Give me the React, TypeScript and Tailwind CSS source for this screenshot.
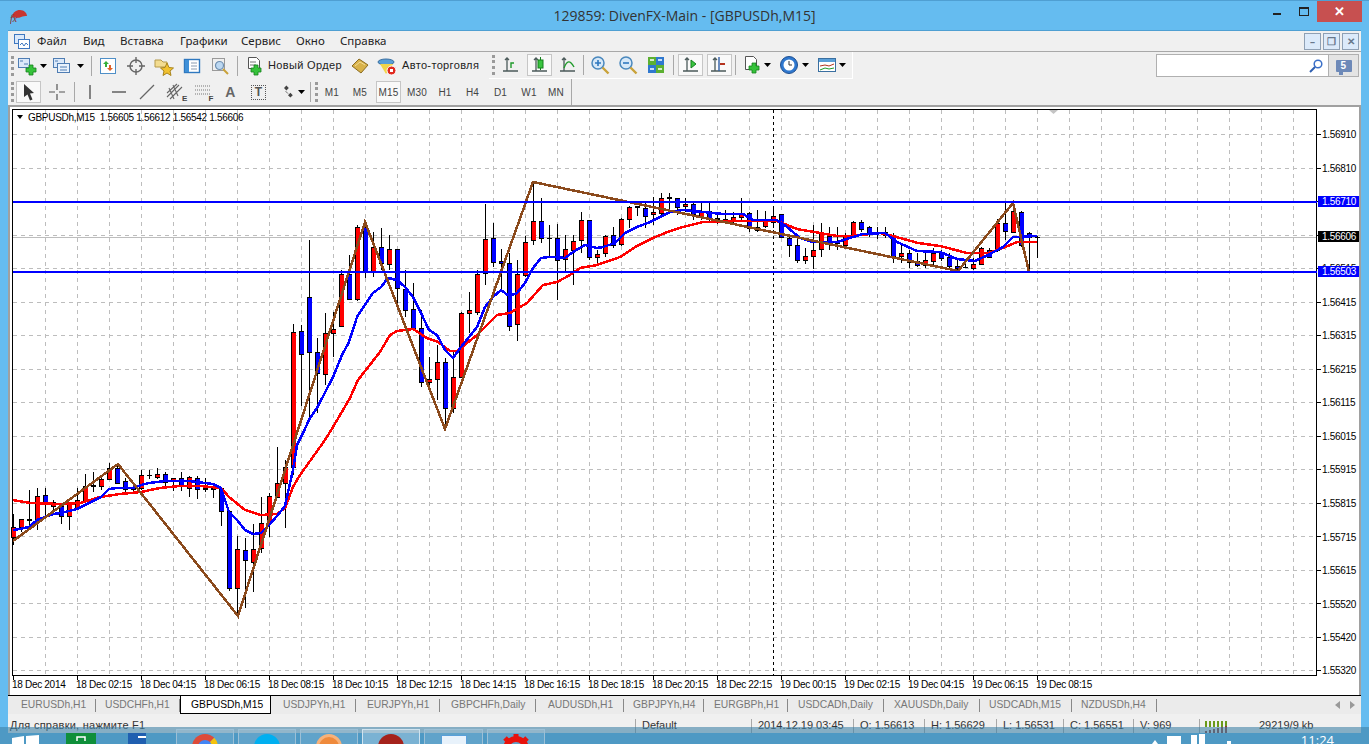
import type { ReactNode } from 'react';

type Candle = [number, number, number, number, 'r' | 'b' | 'd'];

// body top, body bottom, wick top, wick bottom, colour; one candle every 8px from x=13
const candles: Candle[] = [
    [527, 537, 514, 545, 'r'], [519, 527, 519, 532, 'r'], [519, 521, 490, 530, 'd'], [496, 520, 488, 530, 'r'],
    [495, 503, 488, 517, 'b'], [502, 506, 500, 510, 'r'], [506, 516, 503, 524, 'b'], [504, 516, 503, 530, 'r'],
    [500, 508, 488, 508, 'r'], [486, 500, 474, 502, 'r'], [485, 487, 472, 492, 'd'], [479, 486, 478, 490, 'r'],
    [468, 479, 463, 480, 'r'], [468, 483, 463, 484, 'b'], [481, 489, 478, 493, 'b'], [488, 490, 485, 492, 'd'],
    [475, 488, 470, 490, 'r'], [475, 476, 470, 479, 'd'], [474, 477, 468, 479, 'r'], [474, 482, 472, 487, 'b'],
    [478, 481, 478, 491, 'r'], [478, 485, 472, 491, 'b'], [477, 488, 476, 497, 'r'], [478, 489, 476, 499, 'b'],
    [488, 490, 478, 492, 'd'], [488, 490, 483, 498, 'd'], [488, 511, 487, 526, 'b'], [511, 588, 511, 591, 'b'],
    [549, 588, 536, 616, 'r'], [550, 560, 538, 608, 'b'], [549, 562, 524, 592, 'r'], [523, 548, 497, 553, 'r'],
    [496, 523, 493, 537, 'r'], [483, 497, 447, 498, 'r'], [467, 483, 460, 528, 'r'], [332, 467, 324, 475, 'r'],
    [331, 354, 325, 406, 'b'], [297, 352, 240, 420, 'b'], [352, 373, 338, 413, 'b'], [333, 374, 313, 385, 'r'],
    [329, 333, 312, 357, 'r'], [274, 326, 270, 327, 'r'], [274, 299, 255, 300, 'b'], [227, 299, 225, 301, 'r'],
    [227, 272, 222, 278, 'b'], [247, 272, 232, 277, 'r'], [247, 263, 228, 270, 'b'], [249, 264, 235, 270, 'r'],
    [249, 288, 249, 303, 'b'], [289, 310, 270, 317, 'b'], [309, 328, 283, 330, 'b'], [328, 382, 310, 387, 'b'],
    [379, 382, 357, 387, 'r'], [362, 379, 345, 400, 'r'], [362, 408, 358, 430, 'b'], [377, 408, 352, 413, 'r'],
    [313, 377, 312, 378, 'r'], [310, 313, 292, 333, 'r'], [274, 312, 270, 315, 'r'], [239, 273, 204, 285, 'r'],
    [238, 262, 223, 267, 'b'], [261, 263, 249, 290, 'b'], [263, 326, 253, 331, 'b'], [274, 324, 260, 341, 'r'],
    [242, 275, 236, 277, 'r'], [221, 240, 182, 245, 'r'], [221, 238, 198, 243, 'b'], [238, 239, 225, 257, 'd'],
    [238, 260, 224, 300, 'b'], [249, 259, 235, 272, 'r'], [241, 250, 235, 285, 'r'], [220, 240, 212, 253, 'r'],
    [220, 257, 220, 260, 'b'], [254, 257, 250, 265, 'r'], [236, 253, 235, 257, 'r'], [235, 245, 227, 248, 'b'],
    [219, 244, 218, 246, 'r'], [207, 219, 206, 228, 'r'], [206, 208, 206, 216, 'd'], [208, 216, 203, 228, 'b'],
    [212, 214, 197, 225, 'r'], [198, 213, 193, 215, 'r'], [197, 199, 193, 213, 'd'], [198, 207, 198, 215, 'b'],
    [204, 206, 198, 212, 'r'], [204, 214, 202, 220, 'b'], [212, 216, 203, 220, 'r'], [211, 218, 203, 222, 'b'],
    [218, 220, 212, 224, 'd'], [219, 220, 210, 222, 'd'], [217, 220, 212, 223, 'r'], [213, 217, 198, 222, 'r'],
    [213, 228, 212, 232, 'b'], [227, 230, 210, 232, 'r'], [219, 226, 211, 228, 'r'], [216, 222, 208, 228, 'r'],
    [214, 237, 214, 238, 'b'], [238, 245, 235, 257, 'b'], [245, 260, 237, 263, 'b'], [256, 260, 248, 264, 'r'],
    [250, 256, 225, 269, 'r'], [233, 249, 223, 257, 'r'], [236, 244, 227, 250, 'b'], [243, 244, 227, 250, 'd'],
    [236, 245, 233, 247, 'r'], [222, 235, 221, 236, 'r'], [222, 229, 220, 232, 'b'], [227, 233, 226, 237, 'b'],
    [232, 233, 227, 239, 'd'], [232, 235, 227, 238, 'b'], [235, 256, 233, 263, 'b'], [253, 256, 243, 263, 'r'],
    [253, 262, 250, 268, 'b'], [261, 265, 253, 267, 'b'], [260, 265, 252, 268, 'r'], [253, 261, 248, 265, 'r'],
    [252, 258, 250, 261, 'b'], [257, 266, 253, 268, 'b'], [266, 268, 260, 270, 'b'], [267, 268, 260, 268, 'd'],
    [264, 268, 258, 270, 'r'], [248, 264, 247, 264, 'r'], [250, 257, 248, 257, 'b'], [223, 250, 219, 252, 'r'],
    [223, 231, 202, 240, 'b'], [211, 232, 203, 233, 'r'], [212, 245, 211, 247, 'b'], [233, 237, 232, 272, 'b'],
    [237, 238, 236, 258, 'd'],
];

const blueMa = '13,530 20,529 29,527 37,520 45,517 53,514 61,513 69,511 77,509 85,505 93,501 101,497 109,489 117,488 133,488 141,485 149,483 157,482 165,481 189,481 197,482 205,483 213,484 221,488 229,512 237,520 245,530 253,534 261,533 269,525 277,516 285,506 293,470 297,445 303,433 310,418 317,408 333,377 342,355 349,342 357,317 365,305 373,293 381,287 388,278 397,280 405,287 413,297 421,313 429,330 437,335 445,350 453,358 461,347 469,337 477,327 485,307 493,297 501,290 509,296 517,293 525,283 533,268 541,258 549,257 557,257 565,258 573,252 585,245 597,248 603,247 615,243 625,233 637,227 650,222 670,212 683,210 703,212 723,214 743,214 753,220 777,220 787,227 800,238 813,242 837,242 853,237 863,234 885,233 897,242 917,251 940,252 957,259 975,261 988,255 1003,247 1013,237 1037,236';
const redMa = '13,500 30,503 60,504 80,503 100,497 120,494 141,492 160,488 180,486 200,486 221,488 229,497 245,510 261,515 277,514 285,508 293,487 300,475 325,440 333,427 350,398 358,380 380,352 390,335 397,331 413,329 427,338 438,342 450,351 457,351 477,335 497,315 510,313 527,303 543,285 557,282 570,275 580,268 597,265 620,257 637,246 653,238 670,231 683,227 703,222 717,222 737,221 777,221 797,229 820,233 837,236 853,236 870,234 880,233 893,236 918,243 940,246 967,253 988,253 1003,248 1017,242 1037,242';
const zigzag = '13,541 118,464 238,616 365,222 445,429 533,182 958,271 1013,203 1029,272';

const priceLabels: [string, number][] = [
    ['1.56910', 134], ['1.56810', 168], ['1.56415', 302], ['1.56315', 335], ['1.56215', 369], ['1.56115', 402],
    ['1.56015', 436], ['1.55915', 469], ['1.55815', 503], ['1.55715', 537], ['1.55615', 570], ['1.55520', 604],
    ['1.55420', 637], ['1.55320', 670], ['1.56515', 268],
];

const timeLabels = [
    '18 Dec 2014', '18 Dec 02:15', '18 Dec 04:15', '18 Dec 06:15', '18 Dec 08:15', '18 Dec 10:15', '18 Dec 12:15', '18 Dec 14:15',
    '18 Dec 16:15', '18 Dec 18:15', '18 Dec 20:15', '18 Dec 22:15', '19 Dec 00:15', '19 Dec 02:15', '19 Dec 04:15', '19 Dec 06:15', '19 Dec 08:15',
];

const gridX = Array.from({ length: 40 }, (_, i) => 45 + i * 32).filter(x => x < 1316);
const gridY = Array.from({ length: 17 }, (_, i) => 134 + i * 33.5);

function Chart() {
    return (
        <svg width="1349" height="588" viewBox="10 107 1349 588" className="block bg-white text-[10px] tracking-[-0.3px] [font-family:'Liberation_Sans',sans-serif]">
            <g shapeRendering="crispEdges">
                {gridX.map(x => <line key={x} x1={x + 0.5} y1="110" x2={x + 0.5} y2="675" stroke="#bdbdbd" strokeDasharray="4 4" />)}
                {gridY.map(y => <line key={y} x1="13" y1={Math.round(y) + 0.5} x2="1316" y2={Math.round(y) + 0.5} stroke="#bdbdbd" strokeDasharray="4 4" />)}
                <line x1="13" y1="237.5" x2="1316" y2="237.5" stroke="#bdbdbd" />
                <line x1="773.5" y1="110" x2="773.5" y2="675" stroke="#000" strokeDasharray="3 3" />
                <rect x="12.5" y="109.5" width="1304" height="566" fill="none" stroke="#000" />
                {timeLabels.map((_, i) => <line key={i} x1={13.5 + i * 64} y1="675" x2={13.5 + i * 64} y2="680" stroke="#000" />)}
                {gridY.map(y => <line key={y} x1="1317" y1={Math.round(y) + 0.5} x2="1321" y2={Math.round(y) + 0.5} stroke="#000" />)}
                {candles.map(([top, bottom, high, low, kind], i) => {
                    const x = 13 + i * 8;
                    return (
                        <g key={i}>
                            <rect x={x} y={high} width="1" height={low - high} fill="#000" />
                            {kind === 'd' ? (
                                <rect x={x - 2} y={top} width="5" height={Math.max(bottom - top, 1)} fill="#000" />
                            ) : (
                                <>
                                    <rect x={x - 2} y={top} width="5" height={bottom - top + 1} fill="#000" />
                                    <rect x={x - 1} y={top + 1} width="4" height={Math.max(bottom - top - 1, 1)} fill={kind === 'r' ? '#ff0000' : '#0000ff'} />
                                </>
                            )}
                        </g>
                    );
                })}
                <polyline points={redMa} fill="none" stroke="#ff0000" strokeWidth="2.5" />
                <polyline points={blueMa} fill="none" stroke="#0000ff" strokeWidth="2.5" />
                <polyline points={zigzag} fill="none" stroke="#8b4a1c" strokeWidth="2.5" />
                <rect x="13" y="201" width="1304" height="2" fill="#0000ff" />
                <rect x="13" y="271" width="1304" height="2" fill="#0000ff" />
            </g>
            <polygon points="1049,110 1058,110 1053.5,114" fill="#c4c4c4" />
            <polygon points="17,115 23,115 20,119" fill="#000" />
            <text x="28" y="121" fill="#000">GBPUSDh,M15 &nbsp;1.56605 1.56612 1.56542 1.56606</text>
            {timeLabels.map((t, i) => <text key={t} x={12 + i * 64} y="688" fill="#000">{t}</text>)}
            {priceLabels.map(([t, y]) => <text key={t} x="1322" y={y + 3.5} fill="#000">{t}</text>)}
            <rect x="1318" y="196" width="41" height="11" fill="#0000ff" />
            <text x="1322" y="205" fill="#fff">1.56710</text>
            <rect x="1318" y="231" width="41" height="11" fill="#000" />
            <text x="1322" y="240" fill="#fff">1.56606</text>
            <rect x="1318" y="266" width="41" height="11" fill="#0000ff" />
            <text x="1322" y="275" fill="#fff">1.56503</text>
        </svg>
    );
}

const Ic = ({ children, size = 20 }: { children: ReactNode; size?: number }) => (
    <svg width={size} height={size} viewBox="0 0 20 20" className="block">{children}</svg>
);

const Plus = ({ x = 9, y = 9 }: { x?: number; y?: number }) => (
    <path d={`M${x + 3} ${y}h4v3h3v4h-3v3h-4v-3h-3v-4h3z`} fill="#35c23a" stroke="#14801d" strokeWidth="0.8" />
);

const Axes = () => <path d="M6 3v13M2 16h15M4 5l2-2 2 2" fill="none" stroke="#4b5a5a" strokeWidth="1.3" />;

const Caret = () => (
    <svg width="7" height="4" viewBox="0 0 7 4" className="block"><polygon points="0,0 7,0 3.5,4" fill="#000" /></svg>
);

const Handle = () => <div className="h-[20px] w-0 border-l-[3px] border-dotted border-[#9a9a9a]" />;

const Sep = () => <div className="h-[20px] w-px bg-[#a8a8a8]" />;

const Slot = ({ w, pressed, children }: { w: string; pressed?: boolean; children?: ReactNode }) => (
    <div className={`flex shrink-0 items-center justify-center ${w}`}>
        {pressed ? (
            <div className="flex h-[22px] w-[25px] items-center justify-center border border-[#c6c6c6] bg-[#f9f9f9]">{children}</div>
        ) : children}
    </div>
);

const WinPair = () => (
    <>
        <rect x="1.5" y="2.5" width="11" height="9" fill="#dbe9fa" stroke="#4f7db3" />
        <path d="M3 5h3M7 8h4" stroke="#4f7db3" />
    </>
);

const menuItems: [string, string][] = [
    ['Файл', 'w-[46px]'], ['Вид', 'w-[37px]'], ['Вставка', 'w-[60px]'], ['Графики', 'w-[61px]'],
    ['Сервис', 'w-[55px]'], ['Окно', 'w-[44px]'], ['Справка', 'w-[60px]'],
];

const tabs: [string, string, string][] = [
    ['EURUSDh,H1', 'w-[84px]', 'pl-[9px]'], ['USDCHFh,H1', 'w-[84px]', 'pl-[9px]'], ['GBPUSDh,M15', 'w-[91px]', 'pl-[10px]'],
    ['USDJPYh,H1', 'w-[85px]', 'pl-[12px]'], ['EURJPYh,H1', 'w-[84px]', 'pl-[11px]'], ['GBPCHFh,Daily', 'w-[96px]', 'pl-[11px]'],
    ['AUDUSDh,H1', 'w-[88px]', 'pl-[12px]'], ['GBPJPYh,H4', 'w-[80px]', 'pl-[9px]'], ['EURGBPh,H1', 'w-[84px]', 'pl-[10px]'],
    ['USDCADh,Daily', 'w-[96px]', 'pl-[10px]'], ['XAUUSDh,Daily', 'w-[96px]', 'pl-[10px]'], ['USDCADh,M15', 'w-[92px]', 'pl-[9px]'],
    ['NZDUSDh,H4', 'w-[85px]', 'pl-[9px]'],
];

const statusCells: [string, string][] = [
    ['Default', 'w-[116px]'], ['2014.12.19 03:45', 'w-[102px]'], ['O: 1.56613', 'w-[71px]'],
    ['H: 1.56629', 'w-[72px]'], ['L: 1.56531', 'w-[67px]'], ['C: 1.56551', 'w-[70px]'], ['V: 969', 'w-[66px]'],
];

const timeframes: [string, string, boolean][] = [
    ['M1', 'w-[28px]', false], ['M5', 'w-[28px]', false], ['M15', 'w-[29px]', true], ['M30', 'w-[28px]', false], ['H1', 'w-[28px]', false],
    ['H4', 'w-[27px]', false], ['D1', 'w-[29px]', false], ['W1', 'w-[28px]', false], ['MN', 'w-[26px]', false],
];

const TaskBtn = ({ w, active, children }: { w: string; active?: boolean; children?: ReactNode }) => (
    <div className={`flex h-[20px] shrink-0 justify-center overflow-hidden border border-b-0 pt-[4px] ${w} ${active ? 'border-[#cfe3ef] bg-white/25' : 'border-[#9cc0d6] bg-white/10'}`}>
        {children}
    </div>
);

export default function App() {
    return (
        <div className="relative h-[744px] w-[1369px] overflow-hidden bg-[#65bcf0] [font-family:'Liberation_Sans',sans-serif]">
            {/* title bar */}
            <div className="relative flex h-[30px] items-center justify-center border-t border-[#4f9fd2]">
                <div className="absolute left-[10px] top-[9px] h-[14px] w-[17px]">
                    <svg width="17" height="14" viewBox="0 0 17 14" className="block">
                        <path d="M2 7C3 2 6 0 10 0s7 3 7 6c-2 0-4 0-6 1-1 1-4 1-9 0z" fill="#c8352f" />
                        <text x="0" y="12" fontSize="10" fontStyle="italic" fill="#8c2a25" className="[font-family:'Liberation_Serif',serif]">fx</text>
                    </svg>
                </div>
                <span className="pb-[1px] text-[14px] text-[#333] [font-family:'Open_Sans',sans-serif]">129859: DivenFX-Main - [GBPUSDh,M15]</span>
                <div className="absolute left-[1273px] top-[12px] h-[2px] w-[8px] bg-[#222]" />
                <div className="absolute left-[1299px] top-[6px] h-[9px] w-[10px] border border-t-2 border-[#222]" />
                <div className="absolute left-[1317px] top-0 flex h-[21px] w-[45px] items-center justify-center bg-[#c75050] text-[13px] font-bold leading-none text-white">✕</div>
            </div>

            {/* terminal window */}
            <div className="ml-[8px] flex h-[703px] w-[1353px] flex-col bg-[#f0f0f0]">
                <div className="h-px bg-[#4f9fd2]" />
                {/* menu */}
                <div className="flex h-[20px] items-center text-[11.5px] text-[#222] [font-family:'Noto_Sans',sans-serif]">
                    <div className="flex w-[29px] shrink-0 justify-center pr-[2px]">
                        <svg width="16" height="15" viewBox="0 0 16 15" className="block">
                            <rect x="0.5" y="0.5" width="10" height="9" fill="#dbe9fa" stroke="#3f78c0" />
                            <rect x="4.5" y="5.5" width="11" height="9" fill="#fff" stroke="#3f78c0" />
                            <path d="M6 11l2-2 2 3 2-3 2 2" fill="none" stroke="#3f78c0" />
                        </svg>
                    </div>
                    {menuItems.map(([label, w]) => <div key={label} className={`shrink-0 ${w}`}>{label}</div>)}
                    <div className="ml-auto flex gap-[2px] pr-[2px]">
                        {['–', '❐', '✕'].map(g => (
                            <div key={g} className="flex h-[17px] w-[17px] items-center justify-center border border-[#8fa0b4] bg-[#dceafa] text-[10px] font-bold leading-none text-[#68788c]">{g}</div>
                        ))}
                    </div>
                </div>

                {/* first toolbar row */}
                <div className="flex h-[28px] items-center border-t border-[#a8a8a8] text-[11px] tracking-[0.35px] text-[#222]">
                    <Slot w="w-[8px]"><Handle /></Slot>
                    <Slot w="w-[22px]"><Ic><WinPair /><Plus /></Ic></Slot>
                    <Slot w="w-[10px]"><Caret /></Slot>
                    <Slot w="w-[4px]" />
                    <Slot w="w-[20px]"><Ic><WinPair /><rect x="5.5" y="7.5" width="12" height="9" fill="#e9f2fc" stroke="#4f7db3" /><path d="M8 11h7M8 14h7" stroke="#4f7db3" /></Ic></Slot>
                    <Slot w="w-[16px]"><Caret /></Slot>
                    <Slot w="w-[6px]"><Sep /></Slot>
                    <Slot w="w-[28px]"><Ic><rect x="2.5" y="2.5" width="15" height="15" fill="#fff" stroke="#4f8fc7" /><path d="M8 5l3 3H9v3H7V8H5z" fill="#35b03a" /><path d="M12 15l-3-3h2V9h2v3h2z" fill="#e0622a" /></Ic></Slot>
                    <Slot w="w-[28px]"><Ic><circle cx="10" cy="10" r="6" fill="none" stroke="#666" strokeWidth="1.4" /><path d="M10 1v6M10 13v6M1 10h6M13 10h6" stroke="#666" strokeWidth="1.4" /></Ic></Slot>
                    <Slot w="w-[28px]"><Ic><path d="M1 4h6l2 2h4v5H1z" fill="#f3dc90" stroke="#b59a4a" /><polygon points="13,7 15,11.5 19.5,12 16,15 17,19.5 13,17 9,19.5 10,15 6.5,12 11,11.5" fill="#f2c230" stroke="#a8841c" /></Ic></Slot>
                    <Slot w="w-[28px]"><Ic><rect x="2.5" y="3.5" width="15" height="13" fill="#fff" stroke="#2f78bf" strokeWidth="1.4" /><rect x="3" y="4" width="4" height="12" fill="#3f90d8" /><path d="M9 7h6M9 10h6M9 13h6" stroke="#8a9bb0" /></Ic></Slot>
                    <Slot w="w-[28px]"><Ic><rect x="2.5" y="2.5" width="12" height="12" fill="#efefef" stroke="#9a9a9a" /><circle cx="9.5" cy="9.5" r="4" fill="#bcd8f2" stroke="#6f8fb0" strokeWidth="1.2" /><path d="M13 13l5 5" stroke="#c9a23a" strokeWidth="2" /></Ic></Slot>
                    <Slot w="w-[6px]"><Sep /></Slot>
                    <Slot w="w-[28px]"><Ic><path d="M4.5 1.5h8l3 3v8h-11z" fill="#fff" stroke="#555" /><path d="M6 6h6M6 9h6" stroke="#777" /><Plus x={7} y={9} /></Ic></Slot>
                    <div className="w-[77px] shrink-0 whitespace-nowrap">Новый Ордер</div>
                    <Slot w="w-[29px]"><Ic><path d="M2 10l7-7 9 6-7 8z" fill="#d8b24a" stroke="#8a6b20" /><path d="M5 10l5-4 5 3" fill="none" stroke="#f2dc96" /></Ic></Slot>
                    <Slot w="w-[26px]"><Ic><ellipse cx="9" cy="6" rx="8" ry="3" fill="#5a9fd8" stroke="#3a6fa0" /><path d="M3 8l6 10 5-6 2-4z" fill="#f2d54a" /><circle cx="14.5" cy="14.5" r="4.5" fill="#e02a20" stroke="#fff" /><rect x="13" y="13" width="3" height="3" fill="#fff" /></Ic></Slot>
                    <div className="w-[89px] shrink-0 whitespace-nowrap pl-[2px]">Авто-торговля</div>
                    {/* second toolbar */}
                    <div className="flex h-full shrink-0 items-center border-b border-r border-b-white border-r-white">
                        <Slot w="w-[8px]"><Handle /></Slot>
                        <Slot w="w-[28px]"><Ic><Axes /><path d="M10 13v-5h3" fill="none" stroke="#1f9a2a" strokeWidth="1.4" /></Ic></Slot>
                        <Slot w="w-[29px]" pressed><Ic><Axes /><rect x="8" y="5" width="5" height="8" fill="#39c43f" stroke="#14801d" /><path d="M10.5 2v3M10.5 13v2" stroke="#14801d" /></Ic></Slot>
                        <Slot w="w-[27px]"><Ic><Axes /><path d="M6 13c3-8 6-8 10-1" fill="none" stroke="#1f9a2a" strokeWidth="1.4" /></Ic></Slot>
                        <Slot w="w-[4px]"><Sep /></Slot>
                        <Slot w="w-[29px]"><Ic><circle cx="8" cy="8" r="6" fill="#d6e8f8" stroke="#4a88bd" strokeWidth="1.5" /><path d="M5 8h6M8 5v6" stroke="#2f78bf" strokeWidth="1.6" /><path d="M12.5 12.5l6 6" stroke="#c9a23a" strokeWidth="2.4" /></Ic></Slot>
                        <Slot w="w-[28px]"><Ic><circle cx="8" cy="8" r="6" fill="#d6e8f8" stroke="#4a88bd" strokeWidth="1.5" /><path d="M5 8h6" stroke="#2f78bf" strokeWidth="1.6" /><path d="M12.5 12.5l6 6" stroke="#c9a23a" strokeWidth="2.4" /></Ic></Slot>
                        <Slot w="w-[28px]"><Ic><rect x="2" y="2" width="8" height="8" fill="#5cb031" /><rect x="10" y="2" width="8" height="8" fill="#2f78cf" /><rect x="2" y="10" width="8" height="8" fill="#2f78cf" /><rect x="10" y="10" width="8" height="8" fill="#5cb031" /><path d="M4 5h4M12 5h4M4 14h4M12 14h4" stroke="#fff" strokeWidth="1.4" /></Ic></Slot>
                        <Slot w="w-[6px]"><Sep /></Slot>
                        <Slot w="w-[29px]" pressed><Ic><Axes /><polygon points="10,5 15,9 10,13" fill="#39c43f" stroke="#14801d" /></Ic></Slot>
                        <Slot w="w-[28px]" pressed><Ic><Axes /><path d="M10 2v14" stroke="#2f5fa8" strokeWidth="1.4" /><path d="M11 9h5" stroke="#b5341f" strokeWidth="2" /></Ic></Slot>
                        <Slot w="w-[4px]"><Sep /></Slot>
                        <Slot w="w-[26px] pl-[6px]"><Ic><path d="M2.5 1.5h8l3 3v10h-11z" fill="#fff" stroke="#555" /><Plus x={6} y={8} /></Ic></Slot>
                        <Slot w="w-[8px]"><Caret /></Slot>
                        <Slot w="w-[29px] pl-[7px]"><Ic><circle cx="10" cy="10" r="8.5" fill="#2f78cf" stroke="#1f4f90" /><circle cx="10" cy="10" r="5.5" fill="#fff" /><path d="M10 6v4h3" fill="none" stroke="#333" /></Ic></Slot>
                        <Slot w="w-[11px]"><Caret /></Slot>
                        <Slot w="w-[27px] pl-[5px]"><Ic><rect x="1.5" y="3.5" width="17" height="13" fill="#fff" stroke="#3a6fa0" /><rect x="2" y="4" width="16" height="3" fill="#5a9fd8" /><path d="M3 11l5-1 4 1 5-2" fill="none" stroke="#b5341f" /><path d="M3 15l5-2 4 1 5-1" fill="none" stroke="#1f9a2a" /></Ic></Slot>
                        <Slot w="w-[14px] pr-[6px]"><Caret /></Slot>
                    </div>
                    {/* search */}
                    <div className="ml-auto flex h-[24px] items-center pr-[2px]">
                        <div className="flex h-[23px] w-[173px] items-center justify-end border border-[#b0b0b0] bg-white pr-[5px]">
                            <svg width="14" height="14" viewBox="0 0 14 14" className="block"><circle cx="9" cy="5" r="3.8" fill="none" stroke="#3a6fc8" strokeWidth="1.5" /><path d="M6 8l-5 5" stroke="#2f5fb0" strokeWidth="2" /></svg>
                        </div>
                        <div className="flex h-[23px] w-[30px] items-center justify-center border border-l-0 border-[#b0b0b0] bg-[#e4e4e4]">
                            <div className="relative flex h-[12px] w-[16px] items-center justify-center rounded-[1px] bg-[#6d89b8] text-[10px] font-bold leading-none text-white">
                                5
                                <div className="absolute -bottom-[3px] left-[3px] h-[4px] w-[4px] bg-[#6d89b8]" />
                            </div>
                        </div>
                    </div>
                </div>

                {/* second toolbar row */}
                <div className="flex h-[26px] items-center text-[10px] tracking-[0.2px] text-[#444]">
                    <Slot w="w-[8px]"><Handle /></Slot>
                    <Slot w="w-[25px]" pressed><Ic><path d="M5 2l10 9-4 .5 2.5 6-2.5 1-2.5-6L5 15z" fill="#333" /></Ic></Slot>
                    <Slot w="w-[32px]"><Ic><path d="M10 2v6M10 12v6M2 10h6M12 10h6" stroke="#555" strokeWidth="1.2" /></Ic></Slot>
                    <Slot w="w-[2px]"><Sep /></Slot>
                    <Slot w="w-[30px]"><Ic><path d="M10 3v14" stroke="#555" strokeWidth="1.4" /></Ic></Slot>
                    <Slot w="w-[28px]"><Ic><path d="M3 10h14" stroke="#555" strokeWidth="1.4" /></Ic></Slot>
                    <Slot w="w-[28px]"><Ic><path d="M3 17L17 3" stroke="#666" strokeWidth="1.2" /></Ic></Slot>
                    <Slot w="w-[27px]"><div className="relative"><Ic><path d="M2 15L14 3M2 11L12 2M5 17L17 5M4 6l5 11M8 3l5 11" stroke="#666" strokeWidth="1.1" fill="none" /></Ic><span className="absolute -bottom-[1px] right-[-3px] text-[8px] font-bold leading-none">E</span></div></Slot>
                    <Slot w="w-[29px]"><div className="relative"><Ic><path d="M2 4h16M2 8h16M2 12h16" stroke="#777" strokeDasharray="1 1" /></Ic><span className="absolute -bottom-[1px] right-[-1px] text-[8px] font-bold leading-none">F</span></div></Slot>
                    <Slot w="w-[27px]"><span className="text-[14px] font-bold leading-none text-[#666]">A</span></Slot>
                    <Slot w="w-[29px]"><div className="flex h-[15px] w-[15px] items-center justify-center border border-dotted border-[#555] text-[12px] font-bold leading-none text-[#555]">T</div></Slot>
                    <Slot w="w-[23px] pl-[7px]"><Ic size={18}><path d="M5 5l3-3 3 3-3 3zM10 14l3-3 3 3-3 3z" fill="#444" /><path d="M7 9l3 3" stroke="#444" /></Ic></Slot>
                    <Slot w="w-[10px]"><Caret /></Slot>
                    <Slot w="w-[8px]"><Sep /></Slot>
                    <Slot w="w-[4px]"><Handle /></Slot>
                    {timeframes.map(([label, w, pressed]) => <Slot key={label} w={w} pressed={pressed}>{label}</Slot>)}
                    <Slot w="w-[4px]"><div className="h-full min-h-[26px] w-px bg-[#a8a8a8]" /></Slot>
                </div>

                {/* chart */}
                <div className="border-x-2 border-t-2 border-x-[#a0a0a0] border-t-[#a0a0a0]">
                    <Chart />
                </div>

                {/* tabs */}
                <div className="flex h-[19px] items-center border-t border-black bg-[#ebebeb] text-[10.3px] text-[#777]">
                    <div className="w-[4px] shrink-0" />
                    {tabs.map(([label, w, pl]) => label === 'GBPUSDh,M15' ? (
                        <div key={label} className={`flex h-[18px] shrink-0 items-center border-x border-b border-black bg-white text-black ${w} ${pl}`}>{label}</div>
                    ) : (
                        <div key={label} className={`flex h-[13px] shrink-0 items-center border-r border-[#888] ${w} ${pl}`}>{label}</div>
                    ))}
                    <div className="ml-auto flex gap-[10px] pr-[6px]">
                        <svg width="5" height="8" viewBox="0 0 5 8" className="block"><polygon points="5,0 5,8 0,4" fill="#999" /></svg>
                        <svg width="5" height="8" viewBox="0 0 5 8" className="block"><polygon points="0,0 0,8 5,4" fill="#999" /></svg>
                    </div>
                </div>

                {/* status bar: text sits low, half under the taskbar */}
                <div className="flex h-[19px] items-end text-[11px] text-[#333]">
                    <div className="h-[14px] w-[627px] shrink-0 pl-[2px] leading-[13px] tracking-[0.25px]">Для справки, нажмите F1</div>
                    {statusCells.map(([label, w]) => (
                        <div key={label} className={`h-[14px] shrink-0 border-l border-[#a8a8a8] pl-[6px] leading-[13px] ${w}`}>{label}</div>
                    ))}
                    <div className="h-[14px] w-[60px] shrink-0 border-l border-[#a8a8a8] pl-[5px] pt-[2px]">
                        <svg width="24" height="12" viewBox="0 0 24 12" className="block">
                            {[0, 4, 8, 12, 16, 20].map(x => <rect key={x} x={x} y="0" width="2" height="6" fill="#6a9a1a" />)}
                            {[0, 4, 8, 12, 16, 20].map((x, i) => <rect key={x} x={x} y={10 - i} width="2" height={2 + i} fill="#8c3a30" />)}
                        </svg>
                    </div>
                    <div className="h-[14px] leading-[13px]">29219/9 kb</div>
                </div>
            </div>

            {/* windows taskbar lying over the window */}
            <div className="absolute bottom-0 left-0 right-0 h-[17px] overflow-hidden bg-[rgba(63,130,167,0.6)]">
                <div className="flex h-full items-start pt-[2px]">
                    <div className="ml-[12px] mt-[6px] shrink-0">
                        <svg width="27" height="20" viewBox="0 0 27 20" className="block"><path d="M0 3l12-2v10H0zM14 1l13-1v11H14z" fill="#fff" /></svg>
                    </div>
                    <div className="ml-[27px] mt-[4px] h-[20px] w-[30px] shrink-0 bg-[#0f8f3a]">
                        <svg width="30" height="12" viewBox="0 0 30 12" className="block"><path d="M11 8V4h8v4" fill="none" stroke="#fff" strokeWidth="1.5" /></svg>
                    </div>
                    <div className="ml-[32px] mt-[4px] flex h-[20px] w-[18px] shrink-0 flex-col gap-[2px] bg-[#1f5fb0] pl-[10px] pt-[3px]">
                        <div className="h-[2px] w-[8px] bg-white" />
                    </div>
                    <div className="ml-[30px] flex gap-[4px]">
                        <TaskBtn w="w-[58px]"><div className="h-[26px] w-[26px] rounded-full border-[6px] border-[#dd4b39] border-r-[#f4c20d] bg-[#4285f4]" /></TaskBtn>
                        <TaskBtn w="w-[58px]"><div className="h-[26px] w-[26px] rounded-full bg-[#00aff0]" /></TaskBtn>
                        <TaskBtn w="w-[58px]"><div className="h-[26px] w-[26px] rounded-full border-[3px] border-[#f7b27a] bg-[#ef8a3c]" /></TaskBtn>
                        <TaskBtn w="w-[58px]" active><div className="h-[26px] w-[26px] rounded-full bg-[#a5221c]" /></TaskBtn>
                        <TaskBtn w="w-[59px]"><div className="mt-[1px] h-[20px] w-[26px] border border-[#5a9fd8] bg-[#e8f2fb]" /></TaskBtn>
                        <TaskBtn w="w-[58px]">
                            <svg width="30" height="30" viewBox="0 0 30 30" className="block"><circle cx="15" cy="15" r="10" fill="none" stroke="#e8120c" strokeWidth="6" /><path d="M15 0v6M4 4l5 5M26 4l-5 5M0 15h6M24 15h6" stroke="#e8120c" strokeWidth="5" /></svg>
                        </TaskBtn>
                    </div>
                    <div className="ml-auto flex shrink-0 items-start pr-[35px] text-white">
                        <svg width="85" height="15" viewBox="0 0 85 15" className="mt-[3px] block"><path d="M0 12l3-4 3 4z" fill="#fff" /><rect x="15" y="4" width="14" height="10" fill="#fff" /><rect x="39" y="3" width="6" height="10" fill="#fff" /><rect x="47" y="2" width="6" height="10" fill="#fff" /><rect x="75" y="9" width="4" height="4" fill="#fff" /></svg>
                        <span className="ml-[64px] mt-[5px] text-[13px] leading-none [font-family:'Open_Sans',sans-serif]">11:24</span>
                    </div>
                </div>
            </div>
        </div>
    );
}
